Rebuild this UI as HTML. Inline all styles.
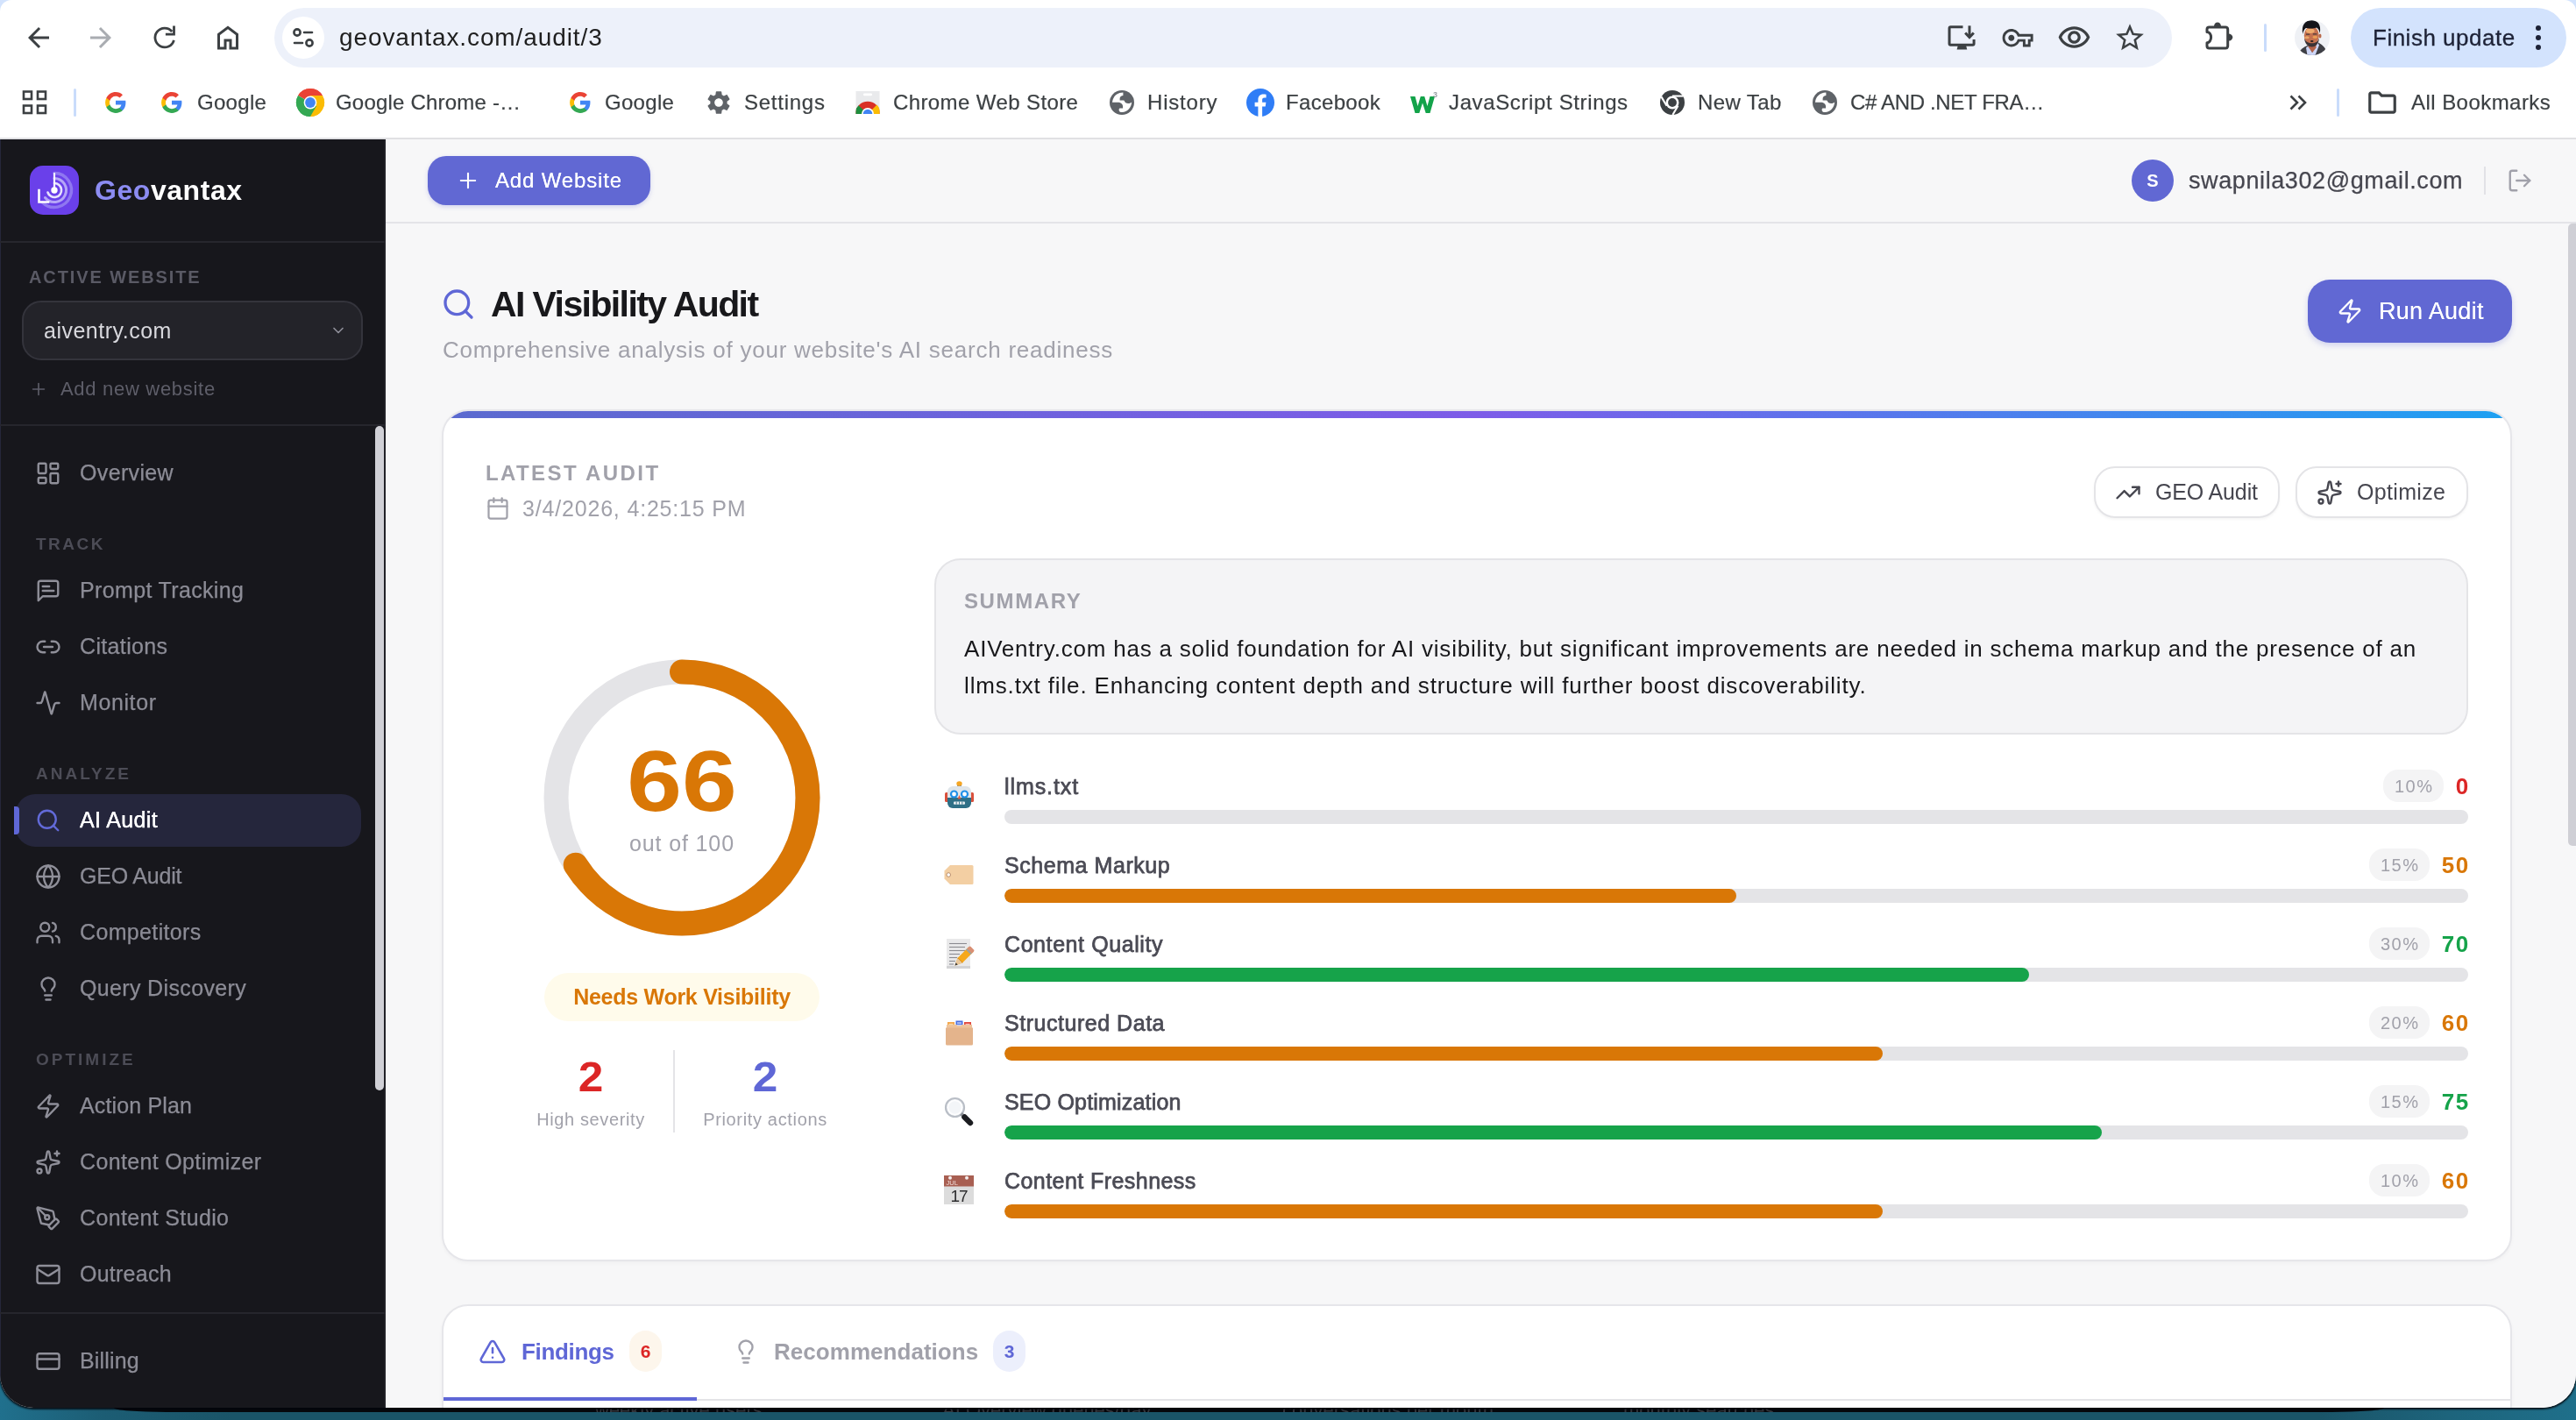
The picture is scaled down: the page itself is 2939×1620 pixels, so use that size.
<!DOCTYPE html>
<html lang="en">
<head>
<meta charset="utf-8">
<title>AI Visibility Audit</title>
<style>
*{box-sizing:border-box}
html,body{margin:0;padding:0}
body{width:2939px;height:1620px;position:relative;overflow:hidden;background:linear-gradient(90deg,#20708d 0,#1c5d74 4%,#1a5468 9%,#1a5468 90%,#1d647c 95%,#1f6f8a 100%);font-family:"Liberation Sans",sans-serif;-webkit-font-smoothing:antialiased}
.abs{position:absolute}
.t{position:absolute;white-space:nowrap;line-height:40px;height:40px;margin-top:-20px;will-change:transform}
svg{position:absolute;overflow:visible}
.ic{fill:none;stroke:currentColor;stroke-width:2;stroke-linecap:round;stroke-linejoin:round}
#deskshadow{overflow:hidden;position:absolute;left:130px;top:1590px;width:2590px;height:21px;border-radius:0 0 60px 60px/0 0 5px 5px;background:#06070c}
#win{position:absolute;left:0;top:0;width:2939px;height:1606px;background:#fff;border-radius:0 0 38px 38px;overflow:hidden;box-shadow:0 1px 2px 1px rgba(4,6,12,.85)}
/* browser chrome */
#chrome{position:absolute;left:0;top:0;width:2939px;height:159px;background:#fff;border-radius:13px 13px 0 0}
.bm{color:#3c4043;font-size:24px;-webkit-text-stroke-width:.2px}
#urlbar{position:absolute;left:313px;top:9px;width:2165px;height:68px;border-radius:34px;background:#edf1fa}
/* sidebar */
#side{position:absolute;left:0;top:159px;width:440px;height:1447px;background:#17171c;border-right:2px solid #212127;border-left:1px solid #25273a}
.nav{margin-top:-21px;font-size:25px;color:#8c8c96;letter-spacing:.35px;left:91px;-webkit-text-stroke-width:.25px}
.sec{font-size:19px;font-weight:700;color:#4c4c56;left:41px}
svg.ni{left:40px;width:30px;height:30px;color:#8f8f99;margin-top:-15px;stroke-width:1.9}
/* main */
#main{position:absolute;left:440px;top:159px;width:2499px;height:1447px;background:#f7f7f8}
.card{position:absolute;background:#fff;border:2px solid #e6e6ea;border-radius:30px;box-shadow:0 2px 4px rgba(0,0,0,.03)}
.lbl{font-size:25px;color:#4b4b55;left:1146px;-webkit-text-stroke-width:.75px}
.track{position:absolute;left:1146px;width:1670px;height:16px;border-radius:8px;background:#e4e4e7;overflow:hidden}
.track i{position:absolute;left:0;top:0;height:16px;border-radius:8px}
.pct{will-change:transform;position:absolute;height:37px;width:69px;border-radius:17px;background:#f4f4f5;color:#a1a1aa;font-size:20px;letter-spacing:1.5px;text-indent:1.5px;line-height:38px;text-align:center}
.sc{font-size:25px;font-weight:700;letter-spacing:1.3px;text-align:right;transform:scaleX(1.04);transform-origin:right center}
</style>
</head>
<body>
<div id="deskshadow"><div class="t" style="left:549px;top:19px;font-size:22px;color:#36373d">weekly active users</div><div class="t" style="left:945px;top:19px;font-size:22px;color:#36373d">AI Overview queries/day</div><div class="t" style="left:1333px;top:19px;font-size:22px;color:#36373d">conversations per month</div><div class="t" style="left:1722px;top:19px;font-size:22px;color:#36373d">monthly searches</div></div>
<div id="win">

<!-- ============ BROWSER CHROME ============ -->
<div class="abs" style="left:0;top:0;width:16px;height:16px;background:#d3e3fd"></div><div class="abs" style="left:2923px;top:0;width:16px;height:16px;background:#d3e3fd"></div>
<div id="chrome">
<!-- nav buttons -->
<svg style="left:26px;top:25px;width:36px;height:36px" viewBox="0 0 24 24"><path fill="#3c4043" d="M20 11H7.83l5.59-5.59L12 4l-8 8 8 8 1.41-1.41L7.83 13H20v-2z"/></svg>
<svg style="left:97px;top:25px;width:36px;height:36px" viewBox="0 0 24 24"><path fill="#a9acb1" d="M12 4l-1.41 1.41L16.17 11H4v2h12.17l-5.58 5.59L12 20l8-8z"/></svg>
<svg style="left:170px;top:25px;width:36px;height:36px" viewBox="0 0 36 36" fill="none" stroke="#3c4043" stroke-width="2.800"><path d="M26.250 11A10.900 10.900 0 1 0 28.400 20.800"/><path d="M28.500 5.900V14.100H20.300" stroke-linecap="square"/></svg>
<svg style="left:242px;top:25px;width:36px;height:36px" viewBox="0 0 24 24"><path fill="#3c4043" d="M6 19h3v-6h6v6h3v-9l-6-4.5L6 10v9zm-2 2V9l8-6 8 6v12h-7v-6h-2v6H4z"/></svg>
<!-- url bar -->
<div id="urlbar"></div>
<div class="abs" style="left:322px;top:19px;width:48px;height:48px;border-radius:24px;background:#fff"></div>
<svg style="left:333px;top:31px;width:26px;height:24px" viewBox="0 0 26 24" fill="none" stroke="#3c4043" stroke-width="2.6" stroke-linecap="round"><circle cx="6" cy="6" r="3.6"/><path d="M14 6h9"/><path d="M3 18h9"/><circle cx="20" cy="18" r="3.6"/></svg>
<div class="t" style="left:387px;top:43px;font-size:28px;letter-spacing:.9px;color:#1f1f1f">geovantax.com/audit/3</div>
<!-- url bar right icons -->
<svg style="left:2220px;top:25px;width:36px;height:36px" viewBox="0 0 24 24" fill="none" stroke="#3c4043" stroke-width="2" stroke-linejoin="round"><path d="M13 3.900H3.700a1 1 0 0 0-1 1V16.500a1 1 0 0 0 1 1H20.400a1 1 0 0 0 1-1V13.300"/><path d="M8.400 21h7.800l-.8-3H9.200z" fill="#3c4043" stroke="none"/><path d="M18 2.900v8.600"/><path d="M14.800 8.300l3.200 3.400 3.200-3.400" stroke-linejoin="miter"/></svg>
<svg style="left:2284px;top:25px;width:36px;height:36px" viewBox="0 0 24 24"><path fill="#3c4043" d="M22 19h-6v-4h-2.68c-1.14 2.42-3.6 4-6.32 4-3.86 0-7-3.14-7-7s3.14-7 7-7c2.72 0 5.17 1.58 6.32 4H24v6h-2v4zm-4-2h2v-4h2v-2H11.94l-.23-.67C11.01 8.34 9.11 7 7 7c-2.76 0-5 2.24-5 5s2.24 5 5 5c2.11 0 4.01-1.34 4.71-3.33l.23-.67H18v4zM7 14.400c-1.320 0-2.400-1.080-2.400-2.400s1.080-2.400 2.400-2.400 2.400 1.080 2.400 2.400-1.080 2.400-2.400 2.400z" transform="translate(.4 .47) scale(.972)"/></svg>
<svg style="left:2346.700px;top:23.300px;width:39px;height:39px" viewBox="0 0 24 24"><path fill="#3c4043" d="M12 6c3.79 0 7.17 2.13 8.82 5.5C19.17 14.87 15.79 17 12 17s-7.170-2.130-8.820-5.500C4.830 8.130 8.210 6 12 6m0-2C7 4 2.730 7.110 1 11.500 2.730 15.890 7 19 12 19s9.270-3.110 11-7.500C21.270 7.110 17 4 12 4zm0 5c1.380 0 2.500 1.120 2.500 2.500S13.380 14 12 14s-2.500-1.120-2.500-2.500S10.620 9 12 9m0-2c-2.480 0-4.500 2.020-4.500 4.500S9.520 16 12 16s4.500-2.020 4.500-4.500S14.480 7 12 7z" transform="translate(0 .5)"/></svg>
<svg style="left:2411.200px;top:23.600px;width:38px;height:38px" viewBox="0 0 24 24"><path fill="#3c4043" d="M22 9.24l-7.190-.62L12 2 9.190 8.630 2 9.240l5.460 4.730L5.820 21 12 17.270 18.180 21l-1.630-7.030L22 9.240zM12 15.400l-3.760 2.270 1-4.280-3.320-2.880 4.380-.38L12 6.100l1.710 4.040 4.380.38-3.320 2.880 1 4.280L12 15.400z"/></svg>
<!-- extensions -->
<svg style="left:2514px;top:23px;width:36px;height:36px" viewBox="0 0 36 36" fill="none" stroke="#3c4043" stroke-width="3" stroke-linejoin="round"><path d="M6.500 7.900H25.200a2.500 2.500 0 0 1 2.500 2.500V29.600a2.500 2.500 0 0 1-2.500 2.500H6.500a2.500 2.500 0 0 1-2.500-2.500V25.800A4.600 6.200 0 0 0 4 13.400V10.400a2.500 2.500 0 0 1 2.500-2.500Z"/><path d="M12 7a4 4.500 0 0 1 8 0z" fill="#3c4043" stroke="none"/><path d="M28.500 15.600a4.800 4 0 0 1 0 8z" fill="#3c4043" stroke="none"/></svg>
<div class="abs" style="left:2583px;top:27px;width:3px;height:32px;border-radius:2px;background:#c9dcfb"></div>
<!-- profile avatar -->
<svg style="left:2618px;top:23px;width:40px;height:40px" viewBox="0 0 40 40"><defs><clipPath id="avc"><circle cx="20" cy="20" r="20"/></clipPath></defs><g clip-path="url(#avc)"><rect width="40" height="40" fill="#eff1f5"/><path d="M4 40C6 33 10 31 15.500 28.500L22 36L27 25.500C31 28 36 31 37.500 40Z" fill="#3e3f45"/><path d="M13 31.500L16 29L20 37L26.200 26L28 28.500L23.500 40H14.500Z" fill="#cdd6f7"/><path d="M15.500 26h9v5.500l-4.300 5.500-4.700-6.500z" fill="#b3634a"/><ellipse cx="19.300" cy="17.500" rx="8.500" ry="10.500" fill="#c4714f"/><ellipse cx="29" cy="18" rx="1.500" ry="2.600" fill="#b96a4b"/><ellipse cx="17.800" cy="12.300" rx="4.800" ry="2.700" fill="#efab6d"/><ellipse cx="14" cy="19.800" rx="2.700" ry="1.500" fill="#e9a566"/><ellipse cx="23.300" cy="19.300" rx="2.900" ry="1.600" fill="#ec9f55"/><path d="M11 20.500C11.500 27.500 16 30.500 19.700 30.500S27.500 27.500 28 20.500C26.500 25 23.500 26.200 19.700 26.200S12.500 25 11 20.500Z" fill="#3b3336"/><path d="M13 16.200h4.200M20.800 15.800h4.600" stroke="#4a3a3a" stroke-width="1.300"/><ellipse cx="19.700" cy="24" rx="1.800" ry=".9" fill="#2a1f1f"/><path d="M9.200 16C7.500 5.500 12 .3 19 .3C26.500 .3 30.500 5 28.800 15C28 11.500 27 9.500 25 8.500C21 10 15.500 9.500 12.800 9C10.800 10.500 9.800 13 9.200 16Z" fill="#14141a"/></g></svg>
<!-- finish update -->
<div class="abs" style="left:2682px;top:9px;width:246px;height:68px;border-radius:34px;background:#d3e3fd"></div>
<div class="t" style="left:2707px;top:43px;font-size:26px;letter-spacing:.5px;color:#1d2236;-webkit-text-stroke-width:.3px">Finish update</div>
<svg style="left:2890px;top:27px;width:12px;height:32px" viewBox="0 0 12 32" fill="#1d2236"><circle cx="6" cy="5" r="3"/><circle cx="6" cy="16" r="3"/><circle cx="6" cy="27" r="3"/></svg>

<!-- bookmarks bar -->
<svg style="left:25px;top:103px;width:30px;height:28px" viewBox="0 0 30 28" fill="none" stroke="#3c4043" stroke-width="2.600"><rect x="2" y="1.500" width="9" height="8.500"/><rect x="18" y="1.500" width="9" height="8.500"/><rect x="2" y="17.500" width="9" height="8.500"/><rect x="18" y="17.500" width="9" height="8.500"/></svg>
<div class="abs" style="left:84px;top:101px;width:3px;height:32px;border-radius:2px;background:#c9dcfb"></div>
<svg style="left:119px;top:104px;width:26px;height:26px" viewBox="0 0 24 24"><use href="#gg"/></svg>
<svg style="left:183px;top:104px;width:26px;height:26px" viewBox="0 0 24 24"><g id="gg"><path fill="#4285F4" d="M22.560 12.250c0-.78-.07-1.530-.2-2.250H12v4.260h5.920c-.26 1.370-1.040 2.530-2.210 3.310v2.770h3.570c2.080-1.920 3.280-4.740 3.280-8.090z"/><path fill="#34A853" d="M12 23c2.970 0 5.460-.98 7.280-2.660l-3.570-2.770c-.98.66-2.230 1.060-3.710 1.060-2.860 0-5.290-1.930-6.160-4.530H2.180v2.840C3.990 20.530 7.700 23 12 23z"/><path fill="#FBBC05" d="M5.840 14.090c-.22-.66-.35-1.360-.35-2.090s.13-1.430.35-2.090V7.070H2.180C1.430 8.550 1 10.220 1 12s.43 3.450 1.180 4.930l2.850-2.220.81-.62z"/><path fill="#EA4335" d="M12 5.380c1.620 0 3.060.56 4.210 1.640l3.150-3.150C17.450 2.090 14.970 1 12 1 7.700 1 3.990 3.470 2.180 7.070l3.660 2.840c.87-2.600 3.300-4.530 6.160-4.530z"/></g></svg>
<div class="t bm" style="left:225px;top:117px;letter-spacing:.3px">Google</div>
<!-- chrome logo -->
<svg style="left:338px;top:101px;width:32px;height:32px" viewBox="0 0 32 32"><circle cx="16" cy="16" r="16" fill="#fff"/><path d="M16 16L2.140 8A16 16 0 0 1 29.860 8z" fill="#ea4335"/><path d="M16 16L29.860 8A16 16 0 0 1 16 32z" fill="#fbbc04"/><path d="M16 16L16 32A16 16 0 0 1 2.140 8z" fill="#34a853"/><path d="M16 8h13.860A16 16 0 0 0 2.140 8z" fill="#ea4335"/><path d="M22.930 20L16 32A16 16 0 0 0 29.860 8H16z" fill="#fbbc04"/><path d="M9.070 20L2.140 8A16 16 0 0 0 16 32l6.930-12z" fill="#34a853"/><circle cx="16" cy="16" r="7.400" fill="#fff"/><circle cx="16" cy="16" r="5.900" fill="#4285f4"/></svg>
<div class="t bm" style="left:383px;top:117px;letter-spacing:.2px">Google Chrome -…</div>
<svg style="left:649px;top:104px;width:26px;height:26px" viewBox="0 0 24 24"><use href="#gg"/></svg>
<div class="t bm" style="left:690px;top:117px;letter-spacing:.3px">Google</div>
<svg style="left:804px;top:101px;width:32px;height:32px" viewBox="0 0 24 24"><path fill="#5f6368" d="M19.140 12.940c.04-.3.06-.61.06-.94 0-.32-.02-.64-.07-.94l2.030-1.580c.18-.14.23-.41.12-.61l-1.920-3.320c-.12-.22-.37-.29-.59-.22l-2.390.96c-.5-.38-1.030-.7-1.620-.94l-.36-2.540c-.04-.24-.24-.41-.48-.41h-3.840c-.24 0-.43.17-.47.41l-.36 2.540c-.59.24-1.130.57-1.620.94l-2.390-.96c-.22-.08-.47 0-.59.22L2.740 8.870c-.12.21-.08.47.12.61l2.030 1.580c-.05.3-.09.63-.09.94s.02.64.07.94l-2.030 1.580c-.18.14-.23.41-.12.61l1.920 3.320c.12.22.37.29.59.22l2.390-.96c.5.38 1.030.7 1.620.94l.36 2.540c.05.24.24.41.48.41h3.840c.24 0 .44-.17.47-.41l.36-2.540c.59-.24 1.130-.56 1.620-.94l2.390.96c.22.08.47 0 .59-.22l1.920-3.320c.12-.22.07-.47-.12-.61l-2.010-1.580zM12 15.600c-1.980 0-3.600-1.620-3.600-3.600s1.620-3.600 3.600-3.600 3.600 1.620 3.600 3.600-1.620 3.600-3.600 3.600z"/></svg>
<div class="t bm" style="left:849px;top:117px;letter-spacing:.75px">Settings</div>
<!-- chrome web store -->
<svg style="left:976px;top:103px;width:28px;height:28px" viewBox="0 0 28 28"><defs><clipPath id="wsc"><rect x=".5" y="1" width="27" height="26"/></clipPath></defs><rect x=".5" y="1" width="27" height="26" fill="#e9eaec"/><rect x="9" y="3.500" width="10" height="2.800" rx="1.200" fill="#fff"/><g clip-path="url(#wsc)"><circle cx="14" cy="27" r="14.200" fill="#d93025"/><path d="M14 27L24.500 16.500A14.200 14.200 0 0 1 28.200 27z" fill="#fbbc04"/><path d="M14 27L-.2 27A14.200 14.200 0 0 1 3.500 17.200z" fill="#1e8e3e"/><circle cx="14" cy="27" r="7" fill="#fff"/><circle cx="14" cy="27" r="5.300" fill="#4285f4"/></g></svg>
<div class="t bm" style="left:1019px;top:117px;letter-spacing:.4px">Chrome Web Store</div>
<svg style="left:1266px;top:103px;width:28px;height:28px" viewBox="0 0 24 24"><g id="glb" transform="scale(.857)"><circle cx="14" cy="14" r="14" fill="#5f6368"/><path fill="#fff" d="M3 13.800C3.400 8 8 2.600 15.400 2.600L15.400 5.900C13.500 6.200 11.600 7.200 11.600 9.500L11.600 11.400L16 11.400C17 11.400 17 12.600 17.400 13.300C18.600 15.200 22.500 15.600 25.200 13.400C25 19 20 25 14.400 25C12 25 10.600 24 10.600 22.400C10.600 21.200 11.200 20.600 12 20.600L15.100 20.600L15.100 18.500C15.100 15.500 12.500 13.800 9.300 13.800Z"/></g></svg>
<div class="t bm" style="left:1309px;top:117px;letter-spacing:.8px">History</div>
<!-- facebook -->
<svg style="left:1422px;top:101px;width:32px;height:32px" viewBox="0 0 32 32"><circle cx="16" cy="16" r="16" fill="#2f7df6"/><path fill="#fff" d="M13.400 32V20.400H9.600v-4.600h3.800v-3.200c0-4 2.300-6.200 5.900-6.200 1.300 0 2.700.2 3.300.3v3.900h-2c-2 0-2.500 1-2.500 2.300v2.900h4.300l-.7 4.600h-3.600V32z"/></svg>
<div class="t bm" style="left:1467px;top:117px;letter-spacing:.33px">Facebook</div>
<!-- w3 -->
<svg style="left:1608px;top:102px;width:33px;height:30px" viewBox="0 0 33 30"><path d="M1 8h5.500l3 11 3.300-11h4.400l3.300 11 3-11H29l-5.500 19h-4.800L15 15.500 11.300 27H6.500z" fill="#13a34a"/><text x="27" y="9" font-family="Liberation Sans" font-size="9" font-weight="700" fill="#9aa0a6">3</text></svg>
<div class="t bm" style="left:1653px;top:117px;letter-spacing:.63px">JavaScript Strings</div>
<!-- new tab chrome gray -->
<svg style="left:1894px;top:103px;width:28px;height:28px" viewBox="0 0 32 32"><g id="cgr"><circle cx="16" cy="16" r="16" fill="#3c4043"/><circle cx="16" cy="16" r="8.500" fill="#fff"/><circle cx="16" cy="16" r="5.600" fill="#3c4043"/><path d="M16 7.500H30" stroke="#fff" stroke-width="2.400"/><path d="M8.640 20.250L1.600 8.400" stroke="#fff" stroke-width="2.400"/><path d="M23.360 20.250L16.400 32" stroke="#fff" stroke-width="2.400"/></g></svg>
<div class="t bm" style="left:1937px;top:117px;letter-spacing:.4px">New Tab</div>
<svg style="left:2068px;top:103px;width:28px;height:28px" viewBox="0 0 24 24"><use href="#glb"/></svg>
<div class="t bm" style="left:2111px;top:117px;letter-spacing:-.34px">C# AND .NET FRA…</div>
<!-- overflow + all bookmarks -->
<svg style="left:2612px;top:108px;width:20px;height:18px" viewBox="0 0 20 18" fill="none" stroke="#3c4043" stroke-width="2.600"><path d="M1.500 1.500l7.500 7.500-7.500 7.500"/><path d="M10.500 1.500l7.500 7.500-7.500 7.500"/></svg>
<div class="abs" style="left:2666px;top:101px;width:3px;height:32px;border-radius:2px;background:#c9dcfb"></div>
<svg style="left:2699px;top:98px;width:38px;height:38px" viewBox="0 0 24 24"><path fill="#3c4043" d="M9.170 6l2 2H20v10H4V6h5.170M10 4H4c-1.100 0-1.990.9-1.990 2L2 18c0 1.100.9 2 2 2h16c1.100 0 2-.9 2-2V8c0-1.100-.9-2-2-2h-8l-2-2z"/></svg>
<div class="t bm" style="left:2751px;top:117px;letter-spacing:.45px">All Bookmarks</div>
<div class="abs" style="left:0;top:157px;width:2939px;height:2px;background:#e0e0e3"></div>
<!--CHROME_END-->
</div>

<!-- ============ SIDEBAR ============ -->
<div id="side"></div>
<!-- logo -->
<div class="abs" style="left:34px;top:189px;width:56px;height:56px;border-radius:15px;background:#6a40ea"></div>
<svg style="left:34px;top:189px;width:56px;height:56px" viewBox="0 0 56 56" fill="none" stroke-linecap="round"><path d="M28 8.500A19.500 19.500 0 1 1 14.200 41.800" stroke="#a99df5" stroke-width="3.400" opacity=".6"/><path d="M28 14.500A13.500 13.500 0 1 1 17.500 36.500" stroke="#cfc8fb" stroke-width="3" opacity=".75"/><path d="M28 20A8 8 0 1 1 20.500 30.500" stroke="#e7e3fd" stroke-width="2.600"/><path d="M28 28V9" stroke="#fff" stroke-width="2.200" opacity=".95"/><path d="M10.500 28v13.500H21" stroke="#fff" stroke-width="2.600" stroke-linecap="square"/><circle cx="28" cy="28" r="3.700" fill="#fff"/></svg>
<div class="t" style="left:108px;top:217px;font-size:32px;font-weight:700;letter-spacing:.55px;color:#fff"><span style="color:#8c8cf2">Geo</span>vantax</div>
<div class="abs" style="left:0;top:275px;width:440px;height:2px;background:#26262d"></div>
<!-- active website -->
<div class="t" style="left:33px;top:316px;font-size:20px;font-weight:700;letter-spacing:1.9px;color:#5a5a65">ACTIVE WEBSITE</div>
<div class="abs" style="left:25px;top:343px;width:389px;height:68px;border-radius:22px;background:#232329;border:2px solid #34343c"></div>
<div class="t" style="left:50px;top:377px;font-size:25px;letter-spacing:.5px;color:#d8d8dd">aiventry.com</div>
<svg class="ic" style="left:376px;top:367px;width:20px;height:20px;color:#8f8f99" viewBox="0 0 24 24"><path d="m6 9 6 6 6-6"/></svg>
<svg class="ic" style="left:33px;top:433px;width:22px;height:22px;color:#5e5e69;stroke-width:1.800" viewBox="0 0 24 24"><path d="M5 12h14"/><path d="M12 5v14"/></svg>
<div class="t" style="left:69px;top:444px;font-size:22px;letter-spacing:.7px;color:#5e5e69">Add new website</div>
<div class="abs" style="left:0;top:484px;width:440px;height:2px;background:#26262d"></div>
<!-- sidebar scrollbar -->
<div class="abs" style="left:428px;top:486px;width:10px;height:758px;border-radius:5px;background:#d0d0d6"></div>
<!-- nav -->
<svg class="ic ni" style="top:540px" viewBox="0 0 24 24"><rect width="7" height="9" x="3" y="3" rx="1"/><rect width="7" height="5" x="14" y="3" rx="1"/><rect width="7" height="9" x="14" y="12" rx="1"/><rect width="7" height="5" x="3" y="16" rx="1"/></svg>
<div class="t nav" style="top:540px">Overview</div>
<div class="t sec" style="top:621px;letter-spacing:2.5px">TRACK</div>
<svg class="ic ni" style="top:674px" viewBox="0 0 24 24"><path d="M21 15a2 2 0 0 1-2 2H7l-4 4V5a2 2 0 0 1 2-2h14a2 2 0 0 1 2 2z"/><path d="M13 8H7"/><path d="M17 12H7"/></svg>
<div class="t nav" style="top:674px">Prompt Tracking</div>
<svg class="ic ni" style="top:738px" viewBox="0 0 24 24"><path d="M9 17H7A5 5 0 0 1 7 7h2"/><path d="M15 7h2a5 5 0 1 1 0 10h-2"/><path d="M8 12h8"/></svg>
<div class="t nav" style="top:738px">Citations</div>
<svg class="ic ni" style="top:802px" viewBox="0 0 24 24"><path d="M22 12h-2.480a2 2 0 0 0-1.930 1.460l-2.350 8.360a.25.25 0 0 1-.48 0L9.240 2.180a.25.25 0 0 0-.48 0l-2.350 8.360A2 2 0 0 1 4.490 12H2"/></svg>
<div class="t nav" style="top:802px;letter-spacing:.6px">Monitor</div>
<div class="t sec" style="top:883px;letter-spacing:3px">ANALYZE</div>
<!-- active item -->
<div class="abs" style="left:18px;top:906px;width:394px;height:60px;border-radius:22px;background:#25263c"></div>
<div class="abs" style="left:16px;top:920px;width:6px;height:32px;border-radius:0 4px 4px 0;background:#5f67d6"></div>
<svg class="ic ni" style="top:936px;color:#626ad8" viewBox="0 0 24 24"><circle cx="11" cy="11" r="8"/><path d="m21 21-4.300-4.300"/></svg>
<div class="t nav" style="top:936px;color:#fff;text-shadow:0 0 .6px #fff">AI Audit</div>
<svg class="ic ni" style="top:1000px" viewBox="0 0 24 24"><circle cx="12" cy="12" r="10"/><path d="M12 2a14.500 14.500 0 0 0 0 20 14.500 14.500 0 0 0 0-20"/><path d="M2 12h20"/></svg>
<div class="t nav" style="top:1000px;letter-spacing:-.2px">GEO Audit</div>
<svg class="ic ni" style="top:1064px" viewBox="0 0 24 24"><path d="M16 21v-2a4 4 0 0 0-4-4H6a4 4 0 0 0-4 4v2"/><circle cx="9" cy="7" r="4"/><path d="M22 21v-2a4 4 0 0 0-3-3.870"/><path d="M16 3.130a4 4 0 0 1 0 7.750"/></svg>
<div class="t nav" style="top:1064px">Competitors</div>
<svg class="ic ni" style="top:1128px" viewBox="0 0 24 24"><path d="M15 14c.2-1 .7-1.700 1.500-2.500 1-.9 1.500-2.200 1.500-3.500A6 6 0 0 0 6 8c0 1 .2 2.200 1.500 3.500.7.700 1.300 1.500 1.500 2.500"/><path d="M9 18h6"/><path d="M10 22h4"/></svg>
<div class="t nav" style="top:1128px">Query Discovery</div>
<div class="t sec" style="top:1209px;letter-spacing:3px">OPTIMIZE</div>
<svg class="ic ni" style="top:1262px" viewBox="0 0 24 24"><path d="M4 14a1 1 0 0 1-.78-1.630l9.900-10.200a.5.500 0 0 1 .86.460l-1.920 6.020A1 1 0 0 0 13 10h7a1 1 0 0 1 .78 1.630l-9.900 10.200a.5.500 0 0 1-.86-.46l1.920-6.020A1 1 0 0 0 11 14z"/></svg>
<div class="t nav" style="top:1262px;letter-spacing:.15px">Action Plan</div>
<svg class="ic ni" style="top:1326px" viewBox="0 0 24 24"><path d="M11.017 2.814a1 1 0 0 1 1.966 0l1.051 5.558a2 2 0 0 0 1.594 1.594l5.558 1.051a1 1 0 0 1 0 1.966l-5.558 1.051a2 2 0 0 0-1.594 1.594l-1.051 5.558a1 1 0 0 1-1.966 0l-1.051-5.558a2 2 0 0 0-1.594-1.594l-5.558-1.051a1 1 0 0 1 0-1.966l5.558-1.051a2 2 0 0 0 1.594-1.594z"/><path d="M20 2v4"/><path d="M22 4h-4"/><circle cx="4" cy="20" r="2"/></svg>
<div class="t nav" style="top:1326px">Content Optimizer</div>
<svg class="ic ni" style="top:1390px" viewBox="0 0 24 24"><path d="M15.707 21.293a1 1 0 0 1-1.414 0l-1.586-1.586a1 1 0 0 1 0-1.414l5.586-5.586a1 1 0 0 1 1.414 0l1.586 1.586a1 1 0 0 1 0 1.414z"/><path d="m18 13-1.375-6.874a1 1 0 0 0-.746-.776L3.235 2.028a1 1 0 0 0-1.207 1.207L5.350 15.879a1 1 0 0 0 .776.746L13 18"/><path d="m2.300 2.300 7.286 7.286"/><circle cx="11" cy="11" r="2"/></svg>
<div class="t nav" style="top:1390px">Content Studio</div>
<svg class="ic ni" style="top:1454px" viewBox="0 0 24 24"><rect width="20" height="16" x="2" y="4" rx="2"/><path d="m22 7-8.970 5.700a1.940 1.940 0 0 1-2.060 0L2 7"/></svg>
<div class="t nav" style="top:1454px;letter-spacing:.25px">Outreach</div>
<div class="abs" style="left:0;top:1497px;width:440px;height:2px;background:#26262d"></div>
<svg class="ic ni" style="top:1553px" viewBox="0 0 24 24"><rect width="20" height="14" x="2" y="5" rx="2"/><path d="M2 10h20"/></svg>
<div class="t nav" style="top:1553px;letter-spacing:.15px">Billing</div>
<!--SIDE_END-->

<!-- ============ MAIN ============ -->
<div id="main"></div>
<!-- top header -->
<div class="abs" style="left:440px;top:253px;width:2499px;height:2px;background:#e4e4e8"></div>
<div class="abs" style="left:488px;top:178px;width:254px;height:56px;border-radius:21px;background:#6168d3;box-shadow:0 2px 5px rgba(97,104,211,.25)"></div>
<svg class="ic" style="left:520px;top:192px;width:28px;height:28px;color:#fff;stroke-width:1.800" viewBox="0 0 24 24"><path d="M5 12h14"/><path d="M12 5v14"/></svg>
<div class="t" style="left:565px;top:206px;font-size:24px;letter-spacing:.85px;color:#fff;text-shadow:0 0 .5px #fff">Add Website</div>
<div class="abs" style="left:2432px;top:182px;width:48px;height:48px;border-radius:24px;background:#6168d3"></div>
<div class="t" style="left:2432px;width:48px;text-align:center;top:206px;font-size:20px;font-weight:700;color:#fff">S</div>
<div class="t" style="left:2497px;top:206px;font-size:27px;letter-spacing:.6px;color:#46464f;-webkit-text-stroke-width:.25px">swapnila302@gmail.com</div>
<div class="abs" style="left:2834px;top:190px;width:2px;height:32px;background:#e2e2e6"></div>
<svg class="ic" style="left:2860px;top:191px;width:30px;height:30px;color:#a1a1aa;stroke-width:1.900" viewBox="0 0 24 24"><path d="M9 21H5a2 2 0 0 1-2-2V5a2 2 0 0 1 2-2h4"/><polyline points="16 17 21 12 16 7"/><line x1="21" x2="9" y1="12" y2="12"/></svg>
<!-- page scrollbar -->
<div class="abs" style="left:2930px;top:255px;width:9px;height:710px;border-radius:5px 0 0 5px;background:#cfcfd5"></div>
<!-- title -->
<svg class="ic" style="left:503px;top:327px;width:40px;height:40px;color:#5f67d6;stroke-width:2" viewBox="0 0 24 24"><circle cx="11" cy="11" r="8"/><path d="m21 21-4.300-4.300"/></svg>
<div class="t" style="left:560px;top:347px;font-size:41px;font-weight:700;letter-spacing:-1.6px;color:#18181b;line-height:50px;height:50px;margin-top:-25px">AI Visibility Audit</div>
<div class="t" style="left:505px;top:399px;font-size:26px;letter-spacing:.77px;color:#a1a1aa">Comprehensive analysis of your website's AI search readiness</div>
<div class="abs" style="left:2633px;top:319px;width:233px;height:72px;border-radius:25px;background:#6168d3;box-shadow:0 3px 6px rgba(97,104,211,.25)"></div>
<svg class="ic" style="left:2666px;top:340px;width:30px;height:30px;color:#fff;stroke-width:1.900" viewBox="0 0 24 24"><path d="M4 14a1 1 0 0 1-.78-1.630l9.900-10.200a.5.500 0 0 1 .86.460l-1.920 6.020A1 1 0 0 0 13 10h7a1 1 0 0 1 .78 1.630l-9.900 10.200a.5.500 0 0 1-.86-.46l1.920-6.020A1 1 0 0 0 11 14z"/></svg>
<div class="t" style="left:2714px;top:355px;font-size:27px;letter-spacing:.3px;color:#fff;text-shadow:0 0 .5px #fff">Run Audit</div>

<!-- ===== card 1 ===== -->
<div class="card" style="left:504px;top:467px;width:2362px;height:972px;overflow:hidden"><div class="abs" style="left:-2px;top:-2px;width:2362px;height:10px;background:linear-gradient(90deg,#5a6acf 0%,#7d5ce8 50%,#1da1f2 100%)"></div></div>
<div class="t" style="left:554px;top:540px;font-size:24px;font-weight:700;letter-spacing:2.4px;color:#a1a1aa">LATEST AUDIT</div>
<svg class="ic" style="left:554px;top:566px;width:28px;height:28px;color:#a1a1aa;stroke-width:1.900" viewBox="0 0 24 24"><path d="M8 2v4"/><path d="M16 2v4"/><rect width="18" height="18" x="3" y="4" rx="2"/><path d="M3 10h18"/></svg>
<div class="t" style="left:596px;top:580px;font-size:25px;letter-spacing:.82px;color:#a1a1aa">3/4/2026, 4:25:15 PM</div>
<div class="abs" style="left:2389px;top:532px;width:212px;height:59px;border-radius:24px;background:#fff;border:2px solid #e4e4e7;box-shadow:0 2px 3px rgba(0,0,0,.04)"></div>
<svg class="ic" style="left:2413px;top:547px;width:30px;height:30px;color:#46464f;stroke-width:1.900" viewBox="0 0 24 24"><polyline points="22 7 13.500 15.500 8.500 10.500 2 17"/><polyline points="16 7 22 7 22 13"/></svg>
<div class="t" style="left:2459px;top:561px;font-size:25px;letter-spacing:-.14px;color:#46464f">GEO Audit</div>
<div class="abs" style="left:2619px;top:532px;width:197px;height:59px;border-radius:24px;background:#fff;border:2px solid #e4e4e7;box-shadow:0 2px 3px rgba(0,0,0,.04)"></div>
<svg class="ic" style="left:2643px;top:547px;width:30px;height:30px;color:#46464f;stroke-width:1.900" viewBox="0 0 24 24"><path d="M11.017 2.814a1 1 0 0 1 1.966 0l1.051 5.558a2 2 0 0 0 1.594 1.594l5.558 1.051a1 1 0 0 1 0 1.966l-5.558 1.051a2 2 0 0 0-1.594 1.594l-1.051 5.558a1 1 0 0 1-1.966 0l-1.051-5.558a2 2 0 0 0-1.594-1.594l-5.558-1.051a1 1 0 0 1 0-1.966l5.558-1.051a2 2 0 0 0 1.594-1.594z"/><path d="M20 2v4"/><path d="M22 4h-4"/><circle cx="4" cy="20" r="2"/></svg>
<div class="t" style="left:2689px;top:561px;font-size:25px;letter-spacing:.34px;color:#46464f">Optimize</div>

<!-- score ring -->
<svg style="left:620px;top:752px;width:316px;height:316px" viewBox="0 0 316 316" fill="none"><circle cx="158" cy="158" r="143.500" stroke="#e4e4e7" stroke-width="28"/><circle cx="158" cy="158" r="143.500" stroke="#d97706" stroke-width="28" stroke-linecap="round" stroke-dasharray="595.080 901.640" transform="rotate(-90 158 158)"/></svg>
<div class="t" style="left:628px;width:300px;text-align:center;top:891px;font-size:98px;font-weight:700;transform:scaleX(1.15);color:#d97706;line-height:110px;height:110px;margin-top:-55px">66</div>
<div class="t" style="left:628px;width:300px;text-align:center;top:962px;font-size:25px;letter-spacing:.86px;color:#a1a1aa">out of 100</div>
<div class="abs" style="left:621px;top:1110px;width:314px;height:55px;border-radius:28px;background:#fffbeb"></div>
<div class="t" style="left:621px;width:314px;text-align:center;top:1137px;font-size:25px;font-weight:700;letter-spacing:-.27px;color:#d97706">Needs Work Visibility</div>
<div class="t" style="left:574px;width:200px;text-align:center;top:1229px;font-size:48px;font-weight:700;transform:scaleX(1.07);color:#dc2626;line-height:56px;height:56px;margin-top:-28px">2</div>
<div class="t" style="left:574px;width:200px;text-align:center;top:1277px;font-size:20px;letter-spacing:.62px;color:#a1a1aa">High severity</div>
<div class="abs" style="left:768px;top:1198px;width:2px;height:94px;background:#e4e4e7"></div>
<div class="t" style="left:773px;width:200px;text-align:center;top:1229px;font-size:48px;font-weight:700;transform:scaleX(1.07);color:#5f67d6;line-height:56px;height:56px;margin-top:-28px">2</div>
<div class="t" style="left:773px;width:200px;text-align:center;top:1277px;font-size:20px;letter-spacing:.66px;color:#a1a1aa">Priority actions</div>

<!-- summary -->
<div class="abs" style="left:1066px;top:637px;width:1750px;height:201px;border-radius:30px;background:#f4f4f6;border:2px solid #e4e4e7"></div>
<div class="t" style="left:1100px;top:686px;font-size:24px;font-weight:700;letter-spacing:1.6px;color:#a1a1aa">SUMMARY</div>
<div class="t" style="left:1100px;top:740px;font-size:26px;letter-spacing:.79px;color:#18181b">AIVentry.com has a solid foundation for AI visibility, but significant improvements are needed in schema markup and the presence of an</div>
<div class="t" style="left:1100px;top:782px;font-size:26px;letter-spacing:.85px;color:#18181b">llms.txt file. Enhancing content depth and structure will further boost discoverability.</div>
<!-- row 0 -->
<svg style="left:1078px;top:891px;width:33px;height:32px" viewBox="0 0 33 32"><rect x="14" y="3" width="5" height="4" fill="#8a8f98"/><ellipse cx="16.500" cy="3" rx="3.200" ry="2.800" fill="#f5a623"/><rect x="0" y="13" width="4" height="11" rx="1.500" fill="#d9503c"/><rect x="29" y="13" width="4" height="11" rx="1.500" fill="#d9503c"/><rect x="3" y="6" width="27" height="25" rx="6" fill="#dfe5ea"/><path d="M3 19h27v6a6 6 0 0 1-6 6H9a6 6 0 0 1-6-6z" fill="#2e6f86"/><circle cx="10.500" cy="15" r="4.600" fill="#1f8fe8"/><circle cx="22.500" cy="15" r="4.600" fill="#1f8fe8"/><circle cx="10.500" cy="15" r="2.400" fill="#fff"/><circle cx="22.500" cy="15" r="2.400" fill="#fff"/><path d="M16.500 16l2 4.500h-4z" fill="#e2573d"/><rect x="10" y="23.500" width="13" height="3.200" rx="1" fill="#e8edf0"/><path d="M13.200 23.500v3.200M16.500 23.500v3.200M19.800 23.500v3.200" stroke="#2e6f86" stroke-width=".9"/></svg>
<div class="t lbl" style="top:897px;letter-spacing:0.92px">llms.txt</div>
<div class="pct" style="left:2719px;top:878px">10%</div>
<div class="t sc" style="left:2716px;width:101.500px;top:897px;color:#dc2626">0</div>
<div class="track" style="top:924px"></div>
<!-- row 1 -->
<svg style="left:1077px;top:982px;width:34px;height:32px" viewBox="0 0 34 32"><path d="M7 5h25a1.500 1.500 0 0 1 1.500 1.500v19A1.500 1.500 0 0 1 32 27H7l-6.500-6.500v-9z" fill="#f3cfa3"/><circle cx="5.200" cy="16" r="2.300" fill="#fff" stroke="#b98d6a" stroke-width="1"/></svg>
<div class="t lbl" style="top:987px;letter-spacing:0.56px">Schema Markup</div>
<div class="pct" style="left:2703px;top:968px">15%</div>
<div class="t sc" style="left:2716px;width:101.500px;top:987px;color:#d97706">50</div>
<div class="track" style="top:1014px"><i style="width:835px;background:#d97706"></i></div>
<!-- row 2 -->
<svg style="left:1079px;top:1071px;width:33px;height:34px" viewBox="0 0 33 34"><rect x="1" y="0" width="27" height="34" fill="#e9e9ea"/><rect x="1" y="31" width="27" height="3" fill="#d2d2d4"/><g stroke="#8b8b90" stroke-width="1.100"><path d="M4 5.500h20"/><path d="M4 9.500h18"/><path d="M4 13.500h20"/><path d="M4 17.500h12"/><path d="M4 21.500h9"/><path d="M4 25.500h7"/><path d="M4 29h5"/></g><path d="M10.500 30.500l3-8.500L26 9.500l5.500 5.500L19 27.500z" fill="#f6a81c"/><path d="M13.500 22l5.500 5.500" stroke="#d88a0d" stroke-width="1.400"/><path d="M10.500 30.500l3-8.500 5.500 5.500z" fill="#e9c79a"/><path d="M10.500 30.500l1.100-3.200 2.100 2.100z" fill="#3a3a3a"/><path d="M24.300 11.200l5.500 5.500 2.200-2.200a1.500 1.500 0 0 0 0-2.100l-3.400-3.400a1.500 1.500 0 0 0-2.100 0z" fill="#d98f74"/><path d="M23 12.500l5.500 5.500 1.300-1.300-5.500-5.500z" fill="#9aa0a8"/></svg>
<div class="t lbl" style="top:1077px;letter-spacing:0.58px">Content Quality</div>
<div class="pct" style="left:2703px;top:1058px">30%</div>
<div class="t sc" style="left:2716px;width:101.500px;top:1077px;color:#16a34a">70</div>
<div class="track" style="top:1104px"><i style="width:1169px;background:#16a34a"></i></div>
<!-- row 3 -->
<svg style="left:1078px;top:1162px;width:33px;height:31px" viewBox="0 0 33 31"><path d="M3 4h8v6H3z" fill="#f3a64a"/><path d="M12.500 2.500h8v6h-8z" fill="#4a6fe0"/><path d="M22 4h8v6h-8z" fill="#e2483c"/><path d="M2 7h29v6H2z" fill="#eec39a"/><g stroke-width="1.400"><path d="M4.500 6.500h5" stroke="#f7d9a8"/><path d="M14 5h5" stroke="#c9d4f7"/><path d="M14 7.500h5" stroke="#c9d4f7"/><path d="M23.500 6.500h5" stroke="#f6c0ba"/></g><path d="M1 10.500h31v18.500a1.500 1.500 0 0 1-1.500 1.500h-28A1.500 1.500 0 0 1 1 29z" fill="#e4b48c"/></svg>
<div class="t lbl" style="top:1167px;letter-spacing:0.53px">Structured Data</div>
<div class="pct" style="left:2703px;top:1148px">20%</div>
<div class="t sc" style="left:2716px;width:101.500px;top:1167px;color:#d97706">60</div>
<div class="track" style="top:1194px"><i style="width:1002px;background:#d97706"></i></div>
<!-- row 4 -->
<svg style="left:1077px;top:1251px;width:34px;height:34px" viewBox="0 0 34 34"><circle cx="12.500" cy="12.500" r="10.500" fill="#f3f5f8" stroke="#b9bec6" stroke-width="2.200"/><circle cx="12.500" cy="12.500" r="8" fill="none" stroke="#fff" stroke-width="1.500" opacity=".9"/><path d="M19.500 19.500l3 3" stroke="#8d9299" stroke-width="4"/><path d="M23.500 23.500L30 30" stroke="#1b1c20" stroke-width="6.400" stroke-linecap="round"/></svg>
<div class="t lbl" style="top:1257px;letter-spacing:0.18px">SEO Optimization</div>
<div class="pct" style="left:2703px;top:1238px">15%</div>
<div class="t sc" style="left:2716px;width:101.500px;top:1257px;color:#16a34a">75</div>
<div class="track" style="top:1284px"><i style="width:1252px;background:#16a34a"></i></div>
<!-- row 5 -->
<svg style="left:1077px;top:1341px;width:34px;height:33px" viewBox="0 0 34 33"><rect x="0" y="0" width="34" height="33" fill="#dcdcdc"/><rect x="0" y="0" width="34" height="12.500" fill="#a85f52"/><circle cx="7" cy="2.800" r="2" fill="#f3eeee"/><circle cx="26" cy="2.800" r="2" fill="#f3eeee"/><text x="2.500" y="11" font-family="Liberation Sans" font-size="7.500" fill="#f1dedb">JUL</text><text x="17" y="29.500" font-family="Liberation Sans" font-size="19" text-anchor="middle" fill="#2c2c2e" letter-spacing="-1">17</text></svg>
<div class="t lbl" style="top:1347px;letter-spacing:0.44px">Content Freshness</div>
<div class="pct" style="left:2703px;top:1328px">10%</div>
<div class="t sc" style="left:2716px;width:101.500px;top:1347px;color:#d97706">60</div>
<div class="track" style="top:1374px"><i style="width:1002px;background:#d97706"></i></div>
<!--ROWS_END-->
<!-- ===== card 2 (tabs) ===== -->
<div class="card" style="left:504px;top:1488px;width:2362px;height:300px"></div>
<div class="abs" style="left:506px;top:1596px;width:2358px;height:2px;background:#e4e4e7"></div>
<div class="abs" style="left:506px;top:1594px;width:289px;height:4px;background:#5f67d6"></div>
<svg class="ic" style="left:546px;top:1526px;width:32px;height:32px;color:#5f67d6;stroke-width:1.900" viewBox="0 0 24 24"><path d="m21.730 18-8-14a2 2 0 0 0-3.480 0l-8 14A2 2 0 0 0 4 21h16a2 2 0 0 0 1.730-3"/><path d="M12 9v4"/><path d="M12 17h.01"/></svg>
<div class="t" style="left:595px;top:1542px;font-size:26px;font-weight:700;letter-spacing:-.33px;color:#5f67d6">Findings</div>
<div class="abs" style="left:718px;top:1518px;width:37px;height:47px;border-radius:19px;background:#fdf6ec"></div>
<div class="t" style="left:718px;width:37px;text-align:center;top:1542px;font-size:21px;font-weight:700;color:#dc2626">6</div>
<svg class="ic" style="left:836px;top:1527px;width:30px;height:30px;color:#a1a1aa;stroke-width:1.900" viewBox="0 0 24 24"><path d="M15 14c.2-1 .7-1.700 1.500-2.500 1-.9 1.500-2.200 1.500-3.500A6 6 0 0 0 6 8c0 1 .2 2.200 1.500 3.500.7.700 1.300 1.500 1.500 2.500"/><path d="M9 18h6"/><path d="M10 22h4"/></svg>
<div class="t" style="left:883px;top:1542px;font-size:26px;font-weight:700;letter-spacing:.04px;color:#a1a1aa">Recommendations</div>
<div class="abs" style="left:1133px;top:1518px;width:37px;height:47px;border-radius:19px;background:#eceffc"></div>
<div class="t" style="left:1133px;width:37px;text-align:center;top:1542px;font-size:21px;font-weight:700;color:#5f67d6">3</div>
<!--CARD2_END-->
<!--MAIN_END-->

</div>
</body>
</html>
